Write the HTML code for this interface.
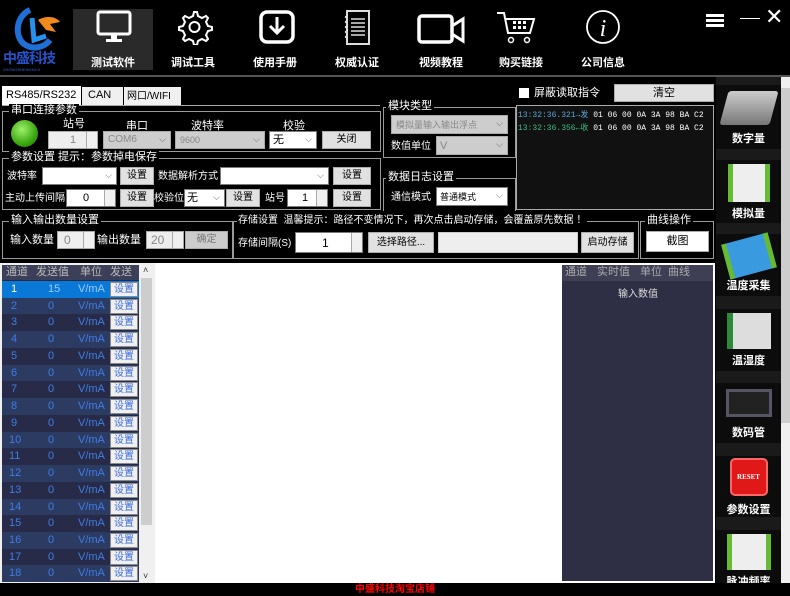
<!DOCTYPE html>
<html><head><meta charset="utf-8">
<style>
*{margin:0;padding:0;box-sizing:border-box}
body{width:790px;height:596px;background:#000;position:relative;overflow:hidden;font-family:"Liberation Sans","Noto Sans CJK SC",sans-serif;font-size:11px;line-height:13px;color:#fff}
.a{position:absolute}
.nav{color:#fff;font-size:11px;font-weight:bold;text-align:center;width:80px}
.lbl{position:absolute;color:#fff;font-size:11px;white-space:nowrap}
.gb{position:absolute;border:1px solid #9a9a9a}
.gt{position:absolute;top:-8px;left:6px;background:#000;color:#fff;padding:0 2px;font-size:11px;white-space:nowrap}
.in{position:absolute;background:#fff;border:1px solid #7a7a7a;color:#000;font-size:11px;line-height:14px;overflow:hidden;white-space:nowrap}
.dis{background:#cdcdcd;color:#888;border-color:#aaa}
.btn{position:absolute;background:#e1e1e1;border:1px solid #adadad;color:#000;font-size:10px;text-align:center}
.dd:after{content:"⌵";position:absolute;right:4px;top:0;color:#666;font-size:9px}
.sp:after{content:"";position:absolute;right:0;top:0;width:10px;height:100%;border-left:1px solid #aaa;background:#f0f0f0}
.tr{position:absolute;left:2px;width:137px;height:17px;font-size:11px;color:#3f7de6}
.tr span{position:absolute;top:2px}
.tr b{position:absolute;left:108px;top:1px;width:28px;height:15px;background:#f0f0f0;border:1px solid #8a8a8a;font-weight:normal;color:#3d6de0;font-size:10px;text-align:center;line-height:13px}
.si{position:absolute;left:716px;width:65px;background:#0c0c0c;text-align:center;font-size:11px;font-weight:bold;color:#fff}
</style></head><body>
<div class="a" style="left:0;top:0;width:790px;height:75px;background:#000"></div>
<div class="a" style="left:0;top:75px;width:790px;height:2px;background:#555"></div>
<svg class="a" style="left:10px;top:6px" width="52" height="46" viewBox="0 0 52 46">
<path d="M20 4 C6 10 4 30 14 38 C22 44 34 42 40 34" stroke="#1f6fd6" stroke-width="6" fill="none"/>
<path d="M22 12 L24 34 L36 30" stroke="#2590f0" stroke-width="5" fill="none"/>
<path d="M28 14 C38 8 48 12 50 16 L40 18 L46 26 L36 24" fill="#f08a1a"/>
</svg>
<div class="a" style="left:3px;top:50px;font-size:14px;font-weight:bold;color:#2452c8;letter-spacing:-1px;line-height:16px">中盛科技</div>
<div class="a" style="left:3px;top:67px;font-size:4px;color:#3a5fc0;line-height:5px">ZHONGSHENGKEJI</div>
<div class="a" style="left:73px;top:9px;width:80px;height:61px;background:#2a2a2a"></div>
<svg class="a" style="left:96px;top:10px" width="36" height="33"><rect x="2" y="2" width="32" height="22" rx="2" fill="none" stroke="#fff" stroke-width="3"/><rect x="15" y="24" width="6" height="5" fill="#fff"/><rect x="10" y="29" width="16" height="3" fill="#fff"/></svg>
<div class="a nav" style="left:73px;top:57px">测试软件</div>
<svg class="a" style="left:175px;top:9px" width="38" height="36" viewBox="0 0 38 36"><path d="M19 3 l3 0 1 4 4 2 4-2 2 2-2 4 2 4 4 1 0 3-4 1-2 4 2 4-2 2-4-2-4 2-1 4-3 0-1-4-4-2-4 2-2-2 2-4-2-4-4-1 0-3 4-1 2-4-2-4 2-2 4 2 4-2z" fill="none" stroke="#fff" stroke-width="2"/><circle cx="19.5" cy="18" r="5" fill="none" stroke="#fff" stroke-width="2"/></svg>
<div class="a nav" style="left:153px;top:57px">调试工具</div>
<svg class="a" style="left:258px;top:9px" width="38" height="36"><rect x="3" y="3" width="32" height="30" rx="6" fill="none" stroke="#fff" stroke-width="3.5"/><path d="M19 8 v16 M12 17 l7 7 7-7" stroke="#fff" stroke-width="3" fill="none"/></svg>
<div class="a nav" style="left:235px;top:57px">使用手册</div>
<svg class="a" style="left:343px;top:9px" width="28" height="38"><rect x="4" y="2" width="22" height="33" fill="none" stroke="#ddd" stroke-width="2"/><g stroke="#ddd" stroke-width="1.5"><line x1="8" y1="10" x2="22" y2="10"/><line x1="8" y1="14" x2="22" y2="14"/><line x1="8" y1="18" x2="22" y2="18"/><line x1="8" y1="22" x2="22" y2="22"/><line x1="8" y1="26" x2="22" y2="26"/></g><g fill="#ddd"><circle cx="3" cy="8" r="1.2"/><circle cx="3" cy="13" r="1.2"/><circle cx="3" cy="18" r="1.2"/><circle cx="3" cy="23" r="1.2"/><circle cx="3" cy="28" r="1.2"/></g></svg>
<div class="a nav" style="left:317px;top:57px">权威认证</div>
<svg class="a" style="left:417px;top:14px" width="50" height="32"><rect x="2" y="2" width="33" height="26" rx="3" fill="none" stroke="#fff" stroke-width="3.5"/><path d="M35 12 l11-7 v22 l-11-7" fill="none" stroke="#fff" stroke-width="3"/></svg>
<div class="a nav" style="left:401px;top:57px">视频教程</div>
<svg class="a" style="left:496px;top:10px" width="44" height="36"><path d="M1 3 h7 l4 20 h22 l4-14 h-28" fill="none" stroke="#fff" stroke-width="2"/><rect x="17" y="11" width="3" height="3" fill="#fff"/><rect x="22" y="11" width="3" height="3" fill="#fff"/><rect x="27" y="11" width="3" height="3" fill="#fff"/><rect x="17" y="16" width="3" height="3" fill="#fff"/><rect x="22" y="16" width="3" height="3" fill="#fff"/><rect x="27" y="16" width="3" height="3" fill="#fff"/><circle cx="15" cy="30" r="2.5" fill="none" stroke="#fff" stroke-width="1.5"/><circle cx="31" cy="30" r="2.5" fill="none" stroke="#fff" stroke-width="1.5"/></svg>
<div class="a nav" style="left:481px;top:57px">购买链接</div>
<svg class="a" style="left:585px;top:9px" width="36" height="36"><circle cx="18" cy="18" r="16" fill="none" stroke="#fff" stroke-width="1.8"/><text x="18" y="27" font-family="Liberation Serif" font-style="italic" font-size="24" fill="#fff" text-anchor="middle">i</text></svg>
<div class="a nav" style="left:563px;top:57px">公司信息</div>
<div class="a" style="left:706px;top:14px;width:18px;height:3px;background:#fff;box-shadow:0 5px 0 #fff,0 10px 0 #fff"></div>
<div class="a" style="left:740px;top:18px;width:20px;height:1px;background:#fff"></div>
<div class="a" style="left:765px;top:4px;font-size:22px;color:#fff;line-height:26px">✕</div>

<div class="a" style="left:2px;top:86px;width:79px;height:19px;background:#fff;color:#000;font-size:11px;padding:3px 0 0 4px;white-space:nowrap">RS485/RS232</div>
<div class="a" style="left:82px;top:87px;width:41px;height:18px;background:#f0f0f0;color:#000;font-size:11px;padding:2px 0 0 6px">CAN</div>
<div class="a" style="left:124px;top:87px;width:57px;height:18px;background:#f0f0f0;color:#000;font-size:10px;padding:3px 0 0 3px;white-space:nowrap">网口/WIFI</div>
<div class="a" style="left:2px;top:105px;width:378px;height:1px;background:#aaa"></div>

<div class="gb" style="left:2px;top:111px;width:379px;height:41px"><div class="gt">串口连接参数</div></div>
<div class="a" style="left:11px;top:120px;width:27px;height:27px;border-radius:50%;background:radial-gradient(circle at 40% 35%,#9ef06a,#3aa810 60%,#1e6a05)"></div>
<div class="lbl" style="left:63px;top:118px">站号</div>
<div class="lbl" style="left:126px;top:120px">串口</div>
<div class="lbl" style="left:191px;top:120px">波特率</div>
<div class="lbl" style="left:283px;top:120px">校验</div>
<div class="in sp dis" style="left:48px;top:131px;width:50px;height:18px;text-align:center;padding-top:1px;background:#eee">1</div>
<div class="in dd dis" style="left:103px;top:131px;width:68px;height:18px;padding:1px 4px;font-size:10px">COM6</div>
<div class="in dd dis" style="left:175px;top:131px;width:90px;height:18px;padding:1px 4px;font-size:9px">9600</div>
<div class="in dd" style="left:269px;top:131px;width:48px;height:18px;padding:1px 3px">无</div>
<div class="btn" style="left:322px;top:131px;width:49px;height:18px;line-height:16px">关闭</div>

<div class="gb" style="left:2px;top:158px;width:379px;height:52px"><div class="gt">参数设置 提示：参数掉电保存</div></div>
<div class="lbl" style="left:7px;top:170px;font-size:10px">波特率</div>
<div class="in dd" style="left:42px;top:167px;width:75px;height:18px"></div>
<div class="btn" style="left:120px;top:167px;width:34px;height:18px;line-height:16px">设置</div>
<div class="lbl" style="left:158px;top:170px;font-size:10px">数据解析方式</div>
<div class="in dd" style="left:220px;top:167px;width:109px;height:18px"></div>
<div class="btn" style="left:333px;top:167px;width:38px;height:18px;line-height:16px">设置</div>
<div class="lbl" style="left:5px;top:192px;font-size:10px">主动上传间隔</div>
<div class="in sp" style="left:66px;top:189px;width:50px;height:18px;padding:1px 0 0 16px">0</div>
<div class="btn" style="left:120px;top:189px;width:34px;height:18px;line-height:16px">设置</div>
<div class="lbl" style="left:154px;top:192px;font-size:10px">校验位</div>
<div class="in dd" style="left:184px;top:189px;width:41px;height:18px;padding:1px 2px">无</div>
<div class="btn" style="left:226px;top:189px;width:34px;height:18px;line-height:16px">设置</div>
<div class="lbl" style="left:265px;top:192px;font-size:10px">站号</div>
<div class="in sp" style="left:287px;top:189px;width:41px;height:18px;padding:1px 0 0 14px">1</div>
<div class="btn" style="left:333px;top:189px;width:38px;height:18px;line-height:16px">设置</div>

<div class="gb" style="left:2px;top:221px;width:231px;height:38px"><div class="gt">输入输出数量设置</div></div>
<div class="lbl" style="left:10px;top:234px">输入数量</div>
<div class="in sp dis" style="left:57px;top:231px;width:38px;height:18px;padding:1px 0 0 6px;background:#eee;font-size:12px">0</div>
<div class="lbl" style="left:97px;top:234px">输出数量</div>
<div class="in sp dis" style="left:146px;top:231px;width:38px;height:18px;padding:1px 0 0 4px;background:#eee;font-size:12px">20</div>
<div class="btn" style="left:185px;top:231px;width:43px;height:18px;line-height:16px;background:#ccc;color:#777">确定</div>

<div class="gb" style="left:233px;top:221px;width:406px;height:38px"></div>
<div class="lbl" style="left:237px;top:214px;background:#000;padding:0 1px;font-size:10px">存储设置&nbsp; 温馨提示：路径不变情况下，再次点击启动存储，会覆盖原先数据 ！</div>
<div class="lbl" style="left:238px;top:237px;font-size:10px">存储间隔(S)</div>
<div class="in sp" style="left:295px;top:232px;width:68px;height:21px;padding:3px 0 0 26px;font-size:12px">1</div>
<div class="btn" style="left:368px;top:232px;width:66px;height:21px;line-height:19px">选择路径...</div>
<div class="in" style="left:438px;top:232px;width:140px;height:21px;background:#eee;border-color:#ccc"></div>
<div class="btn" style="left:581px;top:232px;width:53px;height:21px;line-height:19px">启动存储</div>
<div class="gb" style="left:640px;top:221px;width:74px;height:38px"><div class="gt" style="left:4px">曲线操作</div></div>
<div class="btn" style="left:646px;top:231px;width:63px;height:21px;line-height:19px;background:#fff;font-size:11px">截图</div>

<div class="gb" style="left:383px;top:107px;width:133px;height:51px"><div class="gt" style="left:2px">模块类型</div></div>
<div class="in dd dis" style="left:391px;top:115px;width:117px;height:19px;padding:2px 4px;font-size:9px">模拟量输入输出浮点</div>
<div class="lbl" style="left:391px;top:140px;font-size:10px">数值单位</div>
<div class="in dd dis" style="left:436px;top:136px;width:72px;height:19px;padding:2px 3px">V</div>
<div class="gb" style="left:383px;top:178px;width:133px;height:33px;border-bottom:none"><div class="gt" style="left:2px">数据日志设置</div></div>
<div class="lbl" style="left:391px;top:191px;font-size:10px">通信模式</div>
<div class="in dd" style="left:436px;top:187px;width:72px;height:19px;padding:2px 3px;font-size:9px">普通模式</div>

<div class="a" style="left:519px;top:88px;width:10px;height:10px;background:#fff"></div>
<div class="lbl" style="left:534px;top:87px">屏蔽读取指令</div>
<div class="btn" style="left:614px;top:84px;width:100px;height:18px;line-height:16px;font-size:11px">清空</div>
<div class="a" style="left:516px;top:105px;width:198px;height:105px;background:#111;border:1px solid #aaa;font-family:'Liberation Mono','Noto Sans CJK SC',monospace;font-size:8px;padding:3px 1px;line-height:13px;white-space:nowrap;overflow:hidden">
<div><span style="color:#5aa6d6">13:32:36.321→发</span> <span style="color:#fff">01 06 00 0A 3A 98 BA C2</span></div>
<div><span style="color:#3cbf80">13:32:36.356←收</span> <span style="color:#fff">01 06 00 0A 3A 98 BA C2</span></div>
</div>

<div class="a" style="left:0;top:263px;width:155px;height:320px;background:#f0f0f0"></div>
<div class="a" style="left:2px;top:265px;width:137px;height:316px;background:#262a44"></div>
<div class="a" style="left:2px;top:265px;width:137px;height:15px;background:#3b4058;color:#bbb;font-size:11px">
<span class="a" style="left:4px;top:1px">通道</span><span class="a" style="left:34px;top:1px">发送值</span><span class="a" style="left:78px;top:1px">单位</span><span class="a" style="left:108px;top:1px">发送</span></div>
<div class="a" style="left:140px;top:265px;width:13px;height:316px;background:#f0f0f0"></div>
<div class="a" style="left:141px;top:278px;width:11px;height:247px;background:#cdcdcd"></div>
<div class="a" style="left:143px;top:264px;font-size:9px;color:#333">˄</div>
<div class="a" style="left:143px;top:570px;font-size:9px;color:#333">˅</div>

<div class="a" style="left:155px;top:263px;width:405px;height:320px;background:#fff"></div>

<div class="a" style="left:560px;top:263px;width:155px;height:320px;background:#fff"></div>
<div class="a" style="left:562px;top:265px;width:151px;height:316px;background:#2e2f45"></div>
<div class="a" style="left:562px;top:265px;width:151px;height:16px;background:#3e3f55;color:#aaa;font-size:11px">
<span class="a" style="left:3px;top:1px">通道</span><span class="a" style="left:35px;top:1px">实时值</span><span class="a" style="left:78px;top:1px">单位</span><span class="a" style="left:106px;top:1px">曲线</span></div>
<div class="lbl" style="left:618px;top:288px;font-size:10px;color:#ddd">输入数值</div>

<div class="a" style="left:716px;top:77px;width:65px;height:506px;background:#1a1a1a"></div>
<div class="si" style="top:85px;height:64px"><div style="margin:6px auto 0;width:50px;height:34px;background:linear-gradient(#ccc,#777);border-radius:3px;transform:skewX(-15deg)"></div><div style="margin-top:8px">数字量</div></div>
<div class="si" style="top:160px;height:63px"><div style="margin:4px auto 0;width:42px;height:38px;background:#eee;border-left:5px solid #6b3;border-right:5px solid #6b3"></div><div style="margin-top:6px">模拟量</div></div>
<div class="si" style="top:234px;height:62px"><div style="margin:4px auto 0;width:48px;height:36px;background:#3a9ae0;border-left:5px solid #6b3;border-right:5px solid #6b3;transform:rotate(-15deg)"></div><div style="margin-top:6px">温度采集</div></div>
<div class="si" style="top:309px;height:62px"><div style="margin:4px auto 0;width:44px;height:36px;background:#ddd;border-left:6px solid #2a8a3a"></div><div style="margin-top:6px">温湿度</div></div>
<div class="si" style="top:383px;height:60px"><div style="margin:6px auto 0;width:46px;height:28px;background:#222;border:3px solid #556"></div><div style="margin-top:10px">数码管</div></div>
<div class="si" style="top:456px;height:61px"><div style="margin:2px auto 0;width:38px;height:38px;background:#e01818;border:2px solid #f66;border-radius:5px;font-size:7px;font-family:'Liberation Serif';line-height:34px">RESET</div><div style="margin-top:8px">参数设置</div></div>
<div class="si" style="top:530px;height:53px;overflow:hidden"><div style="margin:4px auto 0;width:44px;height:36px;background:#eee;border-left:5px solid #6b3;border-right:5px solid #6b3"></div><div style="margin-top:6px">脉冲频率</div></div>
<div class="a" style="left:781px;top:77px;width:9px;height:506px;background:#f0f0f0"></div>
<div class="a" style="left:781px;top:88px;width:9px;height:335px;background:#cdcdcd"></div>

<div class="a" style="left:0;top:583px;width:790px;height:13px;background:#000;color:#f00;font-size:10px;font-weight:bold;text-align:center;line-height:13px">中盛科技淘宝店铺</div>

<div class="tr" style="top:281px;background:#0a78d7;color:#fff"><span style="left:9px">1</span><span style="left:46px;color:#9cf">15</span><span style="left:76px;color:#9cf">V/mA</span><b>设置</b></div>
<div class="tr" style="top:298px;background:#2c3b62"><span style="left:9px">2</span><span style="left:46px">0</span><span style="left:76px">V/mA</span><b>设置</b></div>
<div class="tr" style="top:314px;background:#272b48"><span style="left:9px">3</span><span style="left:46px">0</span><span style="left:76px">V/mA</span><b>设置</b></div>
<div class="tr" style="top:331px;background:#2c3b62"><span style="left:9px">4</span><span style="left:46px">0</span><span style="left:76px">V/mA</span><b>设置</b></div>
<div class="tr" style="top:348px;background:#272b48"><span style="left:9px">5</span><span style="left:46px">0</span><span style="left:76px">V/mA</span><b>设置</b></div>
<div class="tr" style="top:365px;background:#2c3b62"><span style="left:9px">6</span><span style="left:46px">0</span><span style="left:76px">V/mA</span><b>设置</b></div>
<div class="tr" style="top:381px;background:#272b48"><span style="left:9px">7</span><span style="left:46px">0</span><span style="left:76px">V/mA</span><b>设置</b></div>
<div class="tr" style="top:398px;background:#2c3b62"><span style="left:9px">8</span><span style="left:46px">0</span><span style="left:76px">V/mA</span><b>设置</b></div>
<div class="tr" style="top:415px;background:#272b48"><span style="left:9px">9</span><span style="left:46px">0</span><span style="left:76px">V/mA</span><b>设置</b></div>
<div class="tr" style="top:432px;background:#2c3b62"><span style="left:7px">10</span><span style="left:46px">0</span><span style="left:76px">V/mA</span><b>设置</b></div>
<div class="tr" style="top:448px;background:#272b48"><span style="left:7px">11</span><span style="left:46px">0</span><span style="left:76px">V/mA</span><b>设置</b></div>
<div class="tr" style="top:465px;background:#2c3b62"><span style="left:7px">12</span><span style="left:46px">0</span><span style="left:76px">V/mA</span><b>设置</b></div>
<div class="tr" style="top:482px;background:#272b48"><span style="left:7px">13</span><span style="left:46px">0</span><span style="left:76px">V/mA</span><b>设置</b></div>
<div class="tr" style="top:499px;background:#2c3b62"><span style="left:7px">14</span><span style="left:46px">0</span><span style="left:76px">V/mA</span><b>设置</b></div>
<div class="tr" style="top:515px;background:#272b48"><span style="left:7px">15</span><span style="left:46px">0</span><span style="left:76px">V/mA</span><b>设置</b></div>
<div class="tr" style="top:532px;background:#2c3b62"><span style="left:7px">16</span><span style="left:46px">0</span><span style="left:76px">V/mA</span><b>设置</b></div>
<div class="tr" style="top:549px;background:#272b48"><span style="left:7px">17</span><span style="left:46px">0</span><span style="left:76px">V/mA</span><b>设置</b></div>
<div class="tr" style="top:565px;background:#2c3b62"><span style="left:7px">18</span><span style="left:46px">0</span><span style="left:76px">V/mA</span><b>设置</b></div>
</body></html>
